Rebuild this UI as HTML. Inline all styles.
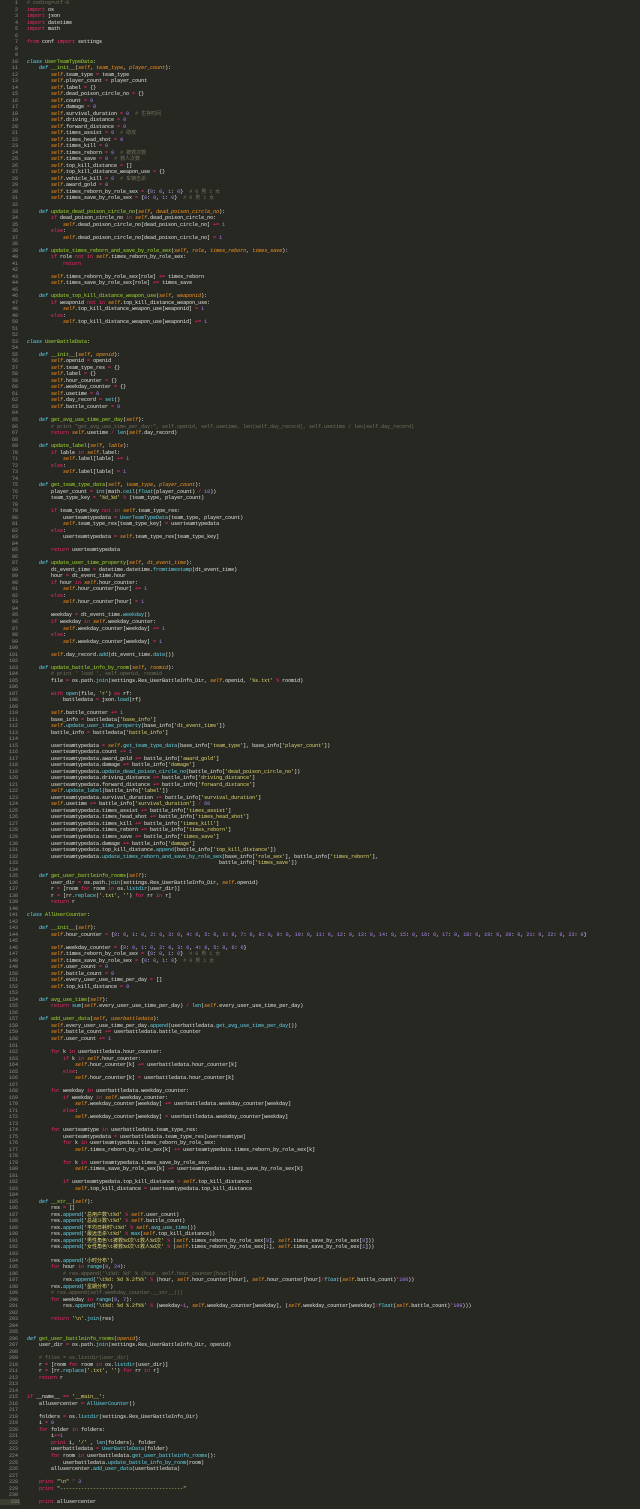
<!DOCTYPE html>
<html><head><meta charset="utf-8"><style>
html,body{margin:0;padding:0;background:#272822;width:640px;height:1509px;overflow:hidden}
#w{position:absolute;left:0;top:0;font-family:"Liberation Mono","Noto Sans CJK SC",monospace;font-size:5px;color:#e8e8e2}
.l{height:6.52px;line-height:6.52px;white-space:pre;position:relative}
.g{display:inline-block;width:18px;text-align:right;color:#8f908a;margin-right:9px}
.cur .g{background:#3e3d32;width:20px;margin-right:7px;padding-right:0}
.k{color:#f92672}.s{color:#fd971f;font-style:italic}.t{color:#e6db74}.n{color:#ae81ff}.f{color:#a6e22e}.c{color:#66d9ef;font-style:italic}.m{color:#75715e}.b{color:#66d9ef}.p{color:#fd971f;font-style:italic}
</style></head><body><div id="w">
<div class="l"><span class="g">1</span><span class="m"># coding=utf-8</span></div>
<div class="l"><span class="g">2</span><span class="k">import</span> os</div>
<div class="l"><span class="g">3</span><span class="k">import</span> json</div>
<div class="l"><span class="g">4</span><span class="k">import</span> datetime</div>
<div class="l"><span class="g">5</span><span class="k">import</span> math</div>
<div class="l"><span class="g">6</span></div>
<div class="l"><span class="g">7</span><span class="k">from</span> conf <span class="k">import</span> settings</div>
<div class="l"><span class="g">8</span></div>
<div class="l"><span class="g">9</span></div>
<div class="l"><span class="g">10</span><span class="c">class</span> <span class="f">UserTeamTypeData</span>:</div>
<div class="l"><span class="g">11</span>    <span class="c">def</span> <span class="f">__init__</span>(<span class="p">self</span>, <span class="p">team_type</span>, <span class="p">player_count</span>):</div>
<div class="l"><span class="g">12</span>        <span class="s">self</span>.team_type <span class="k">=</span> team_type</div>
<div class="l"><span class="g">13</span>        <span class="s">self</span>.player_count <span class="k">=</span> player_count</div>
<div class="l"><span class="g">14</span>        <span class="s">self</span>.label <span class="k">=</span> {}</div>
<div class="l"><span class="g">15</span>        <span class="s">self</span>.dead_poison_circle_no <span class="k">=</span> {}</div>
<div class="l"><span class="g">16</span>        <span class="s">self</span>.count <span class="k">=</span> <span class="n">0</span></div>
<div class="l"><span class="g">17</span>        <span class="s">self</span>.damage <span class="k">=</span> <span class="n">0</span></div>
<div class="l"><span class="g">18</span>        <span class="s">self</span>.survival_duration <span class="k">=</span> <span class="n">0</span>  <span class="m"># 生存时间</span></div>
<div class="l"><span class="g">19</span>        <span class="s">self</span>.driving_distance <span class="k">=</span> <span class="n">0</span></div>
<div class="l"><span class="g">20</span>        <span class="s">self</span>.forward_distance <span class="k">=</span> <span class="n">0</span></div>
<div class="l"><span class="g">21</span>        <span class="s">self</span>.times_assist <span class="k">=</span> <span class="n">0</span>  <span class="m"># 助攻</span></div>
<div class="l"><span class="g">22</span>        <span class="s">self</span>.times_head_shot <span class="k">=</span> <span class="n">0</span></div>
<div class="l"><span class="g">23</span>        <span class="s">self</span>.times_kill <span class="k">=</span> <span class="n">0</span></div>
<div class="l"><span class="g">24</span>        <span class="s">self</span>.times_reborn <span class="k">=</span> <span class="n">0</span>  <span class="m"># 被救次数</span></div>
<div class="l"><span class="g">25</span>        <span class="s">self</span>.times_save <span class="k">=</span> <span class="n">0</span>  <span class="m"># 救人次数</span></div>
<div class="l"><span class="g">26</span>        <span class="s">self</span>.top_kill_distance <span class="k">=</span> []</div>
<div class="l"><span class="g">27</span>        <span class="s">self</span>.top_kill_distance_weapon_use <span class="k">=</span> {}</div>
<div class="l"><span class="g">28</span>        <span class="s">self</span>.vehicle_kill <span class="k">=</span> <span class="n">0</span>  <span class="m"># 车辆击杀</span></div>
<div class="l"><span class="g">29</span>        <span class="s">self</span>.award_gold <span class="k">=</span> <span class="n">0</span></div>
<div class="l"><span class="g">30</span>        <span class="s">self</span>.times_reborn_by_role_sex <span class="k">=</span> {<span class="n">0</span>: <span class="n">0</span>, <span class="n">1</span>: <span class="n">0</span>}  <span class="m"># 0 男 1 女</span></div>
<div class="l"><span class="g">31</span>        <span class="s">self</span>.times_save_by_role_sex <span class="k">=</span> {<span class="n">0</span>: <span class="n">0</span>, <span class="n">1</span>: <span class="n">0</span>}  <span class="m"># 0 男 1 女</span></div>
<div class="l"><span class="g">32</span></div>
<div class="l"><span class="g">33</span>    <span class="c">def</span> <span class="f">update_dead_poison_circle_no</span>(<span class="p">self</span>, <span class="p">dead_poison_circle_no</span>):</div>
<div class="l"><span class="g">34</span>        <span class="k">if</span> dead_poison_circle_no <span class="k">in</span> <span class="s">self</span>.dead_poison_circle_no:</div>
<div class="l"><span class="g">35</span>            <span class="s">self</span>.dead_poison_circle_no[dead_poison_circle_no] <span class="k">+=</span> <span class="n">1</span></div>
<div class="l"><span class="g">36</span>        <span class="k">else</span>:</div>
<div class="l"><span class="g">37</span>            <span class="s">self</span>.dead_poison_circle_no[dead_poison_circle_no] <span class="k">=</span> <span class="n">1</span></div>
<div class="l"><span class="g">38</span></div>
<div class="l"><span class="g">39</span>    <span class="c">def</span> <span class="f">update_times_reborn_and_save_by_role_sex</span>(<span class="p">self</span>, <span class="p">role</span>, <span class="p">times_reborn</span>, <span class="p">times_save</span>):</div>
<div class="l"><span class="g">40</span>        <span class="k">if</span> role <span class="k">not in</span> <span class="s">self</span>.times_reborn_by_role_sex:</div>
<div class="l"><span class="g">41</span>            <span class="k">return</span></div>
<div class="l"><span class="g">42</span></div>
<div class="l"><span class="g">43</span>        <span class="s">self</span>.times_reborn_by_role_sex[role] <span class="k">+=</span> times_reborn</div>
<div class="l"><span class="g">44</span>        <span class="s">self</span>.times_save_by_role_sex[role] <span class="k">+=</span> times_save</div>
<div class="l"><span class="g">45</span></div>
<div class="l"><span class="g">46</span>    <span class="c">def</span> <span class="f">update_top_kill_distance_weapon_use</span>(<span class="p">self</span>, <span class="p">weaponid</span>):</div>
<div class="l"><span class="g">47</span>        <span class="k">if</span> weaponid <span class="k">not in</span> <span class="s">self</span>.top_kill_distance_weapon_use:</div>
<div class="l"><span class="g">48</span>            <span class="s">self</span>.top_kill_distance_weapon_use[weaponid] <span class="k">=</span> <span class="n">1</span></div>
<div class="l"><span class="g">49</span>        <span class="k">else</span>:</div>
<div class="l"><span class="g">50</span>            <span class="s">self</span>.top_kill_distance_weapon_use[weaponid] <span class="k">+=</span> <span class="n">1</span></div>
<div class="l"><span class="g">51</span></div>
<div class="l"><span class="g">52</span></div>
<div class="l"><span class="g">53</span><span class="c">class</span> <span class="f">UserBattleData</span>:</div>
<div class="l"><span class="g">54</span></div>
<div class="l"><span class="g">55</span>    <span class="c">def</span> <span class="f">__init__</span>(<span class="p">self</span>, <span class="p">openid</span>):</div>
<div class="l"><span class="g">56</span>        <span class="s">self</span>.openid <span class="k">=</span> openid</div>
<div class="l"><span class="g">57</span>        <span class="s">self</span>.team_type_res <span class="k">=</span> {}</div>
<div class="l"><span class="g">58</span>        <span class="s">self</span>.label <span class="k">=</span> {}</div>
<div class="l"><span class="g">59</span>        <span class="s">self</span>.hour_counter <span class="k">=</span> {}</div>
<div class="l"><span class="g">60</span>        <span class="s">self</span>.weekday_counter <span class="k">=</span> {}</div>
<div class="l"><span class="g">61</span>        <span class="s">self</span>.usetime <span class="k">=</span> <span class="n">0</span></div>
<div class="l"><span class="g">62</span>        <span class="s">self</span>.day_record <span class="k">=</span> <span class="b">set</span>()</div>
<div class="l"><span class="g">63</span>        <span class="s">self</span>.battle_counter <span class="k">=</span> <span class="n">0</span></div>
<div class="l"><span class="g">64</span></div>
<div class="l"><span class="g">65</span>    <span class="c">def</span> <span class="f">get_avg_use_time_per_day</span>(<span class="p">self</span>):</div>
<div class="l"><span class="g">66</span>        <span class="m"># print "get_avg_use_time_per_day:", self.openid, self.usetime, len(self.day_record), self.usetime / len(self.day_record)</span></div>
<div class="l"><span class="g">67</span>        <span class="k">return</span> <span class="s">self</span>.usetime <span class="k">/</span> <span class="b">len</span>(<span class="s">self</span>.day_record)</div>
<div class="l"><span class="g">68</span></div>
<div class="l"><span class="g">69</span>    <span class="c">def</span> <span class="f">update_label</span>(<span class="p">self</span>, <span class="p">lable</span>):</div>
<div class="l"><span class="g">70</span>        <span class="k">if</span> lable <span class="k">in</span> <span class="s">self</span>.label:</div>
<div class="l"><span class="g">71</span>            <span class="s">self</span>.label[lable] <span class="k">+=</span> <span class="n">1</span></div>
<div class="l"><span class="g">72</span>        <span class="k">else</span>:</div>
<div class="l"><span class="g">73</span>            <span class="s">self</span>.label[lable] <span class="k">=</span> <span class="n">1</span></div>
<div class="l"><span class="g">74</span></div>
<div class="l"><span class="g">75</span>    <span class="c">def</span> <span class="f">get_team_type_data</span>(<span class="p">self</span>, <span class="p">team_type</span>, <span class="p">player_count</span>):</div>
<div class="l"><span class="g">76</span>        player_count <span class="k">=</span> <span class="b">int</span>(math.<span class="b">ceil</span>(<span class="c">float</span>(player_count) <span class="k">/</span> <span class="n">10</span>))</div>
<div class="l"><span class="g">77</span>        team_type_key <span class="k">=</span> <span class="t">'%d_%d'</span> <span class="k">%</span> (team_type, player_count)</div>
<div class="l"><span class="g">78</span></div>
<div class="l"><span class="g">79</span>        <span class="k">if</span> team_type_key <span class="k">not in</span> <span class="s">self</span>.team_type_res:</div>
<div class="l"><span class="g">80</span>            userteamtypedata <span class="k">=</span> <span class="b">UserTeamTypeData</span>(team_type, player_count)</div>
<div class="l"><span class="g">81</span>            <span class="s">self</span>.team_type_res[team_type_key] <span class="k">=</span> userteamtypedata</div>
<div class="l"><span class="g">82</span>        <span class="k">else</span>:</div>
<div class="l"><span class="g">83</span>            userteamtypedata <span class="k">=</span> <span class="s">self</span>.team_type_res[team_type_key]</div>
<div class="l"><span class="g">84</span></div>
<div class="l"><span class="g">85</span>        <span class="k">return</span> userteamtypedata</div>
<div class="l"><span class="g">86</span></div>
<div class="l"><span class="g">87</span>    <span class="c">def</span> <span class="f">update_user_time_property</span>(<span class="p">self</span>, <span class="p">dt_event_time</span>):</div>
<div class="l"><span class="g">88</span>        dt_event_time <span class="k">=</span> datetime.datetime.<span class="b">fromtimestamp</span>(dt_event_time)</div>
<div class="l"><span class="g">89</span>        hour <span class="k">=</span> dt_event_time.hour</div>
<div class="l"><span class="g">90</span>        <span class="k">if</span> hour <span class="k">in</span> <span class="s">self</span>.hour_counter:</div>
<div class="l"><span class="g">91</span>            <span class="s">self</span>.hour_counter[hour] <span class="k">+=</span> <span class="n">1</span></div>
<div class="l"><span class="g">92</span>        <span class="k">else</span>:</div>
<div class="l"><span class="g">93</span>            <span class="s">self</span>.hour_counter[hour] <span class="k">=</span> <span class="n">1</span></div>
<div class="l"><span class="g">94</span></div>
<div class="l"><span class="g">95</span>        weekday <span class="k">=</span> dt_event_time.<span class="b">weekday</span>()</div>
<div class="l"><span class="g">96</span>        <span class="k">if</span> weekday <span class="k">in</span> <span class="s">self</span>.weekday_counter:</div>
<div class="l"><span class="g">97</span>            <span class="s">self</span>.weekday_counter[weekday] <span class="k">+=</span> <span class="n">1</span></div>
<div class="l"><span class="g">98</span>        <span class="k">else</span>:</div>
<div class="l"><span class="g">99</span>            <span class="s">self</span>.weekday_counter[weekday] <span class="k">=</span> <span class="n">1</span></div>
<div class="l"><span class="g">100</span></div>
<div class="l"><span class="g">101</span>        <span class="s">self</span>.day_record.<span class="b">add</span>(dt_event_time.<span class="b">date</span>())</div>
<div class="l"><span class="g">102</span></div>
<div class="l"><span class="g">103</span>    <span class="c">def</span> <span class="f">update_battle_info_by_room</span>(<span class="p">self</span>, <span class="p">roomid</span>):</div>
<div class="l"><span class="g">104</span>        <span class="m"># print ' load ', self.openid, roomid</span></div>
<div class="l"><span class="g">105</span>        file <span class="k">=</span> os.path.<span class="b">join</span>(settings.Res_UserBattleInfo_Dir, <span class="s">self</span>.openid, <span class="t">'%s.txt'</span> <span class="k">%</span> roomid)</div>
<div class="l"><span class="g">106</span></div>
<div class="l"><span class="g">107</span>        <span class="k">with</span> <span class="b">open</span>(file, <span class="t">'r'</span>) <span class="k">as</span> rf:</div>
<div class="l"><span class="g">108</span>            battledata <span class="k">=</span> json.<span class="b">load</span>(rf)</div>
<div class="l"><span class="g">109</span></div>
<div class="l"><span class="g">110</span>        <span class="s">self</span>.battle_counter <span class="k">+=</span> <span class="n">1</span></div>
<div class="l"><span class="g">111</span>        base_info <span class="k">=</span> battledata[<span class="t">'base_info'</span>]</div>
<div class="l"><span class="g">112</span>        <span class="s">self</span>.<span class="b">update_user_time_property</span>(base_info[<span class="t">'dt_event_time'</span>])</div>
<div class="l"><span class="g">113</span>        battle_info <span class="k">=</span> battledata[<span class="t">'battle_info'</span>]</div>
<div class="l"><span class="g">114</span></div>
<div class="l"><span class="g">115</span>        userteamtypedata <span class="k">=</span> <span class="s">self</span>.<span class="b">get_team_type_data</span>(base_info[<span class="t">'team_type'</span>], base_info[<span class="t">'player_count'</span>])</div>
<div class="l"><span class="g">116</span>        userteamtypedata.count <span class="k">+=</span> <span class="n">1</span></div>
<div class="l"><span class="g">117</span>        userteamtypedata.award_gold <span class="k">+=</span> battle_info[<span class="t">'award_gold'</span>]</div>
<div class="l"><span class="g">118</span>        userteamtypedata.damage <span class="k">+=</span> battle_info[<span class="t">'damage'</span>]</div>
<div class="l"><span class="g">119</span>        userteamtypedata.<span class="b">update_dead_poison_circle_no</span>(battle_info[<span class="t">'dead_poison_circle_no'</span>])</div>
<div class="l"><span class="g">120</span>        userteamtypedata.driving_distance <span class="k">+=</span> battle_info[<span class="t">'driving_distance'</span>]</div>
<div class="l"><span class="g">121</span>        userteamtypedata.forward_distance <span class="k">+=</span> battle_info[<span class="t">'forward_distance'</span>]</div>
<div class="l"><span class="g">122</span>        <span class="s">self</span>.<span class="b">update_label</span>(battle_info[<span class="t">'label'</span>])</div>
<div class="l"><span class="g">123</span>        userteamtypedata.survival_duration <span class="k">+=</span> battle_info[<span class="t">'survival_duration'</span>]</div>
<div class="l"><span class="g">124</span>        <span class="s">self</span>.usetime <span class="k">+=</span> battle_info[<span class="t">'survival_duration'</span>] <span class="k">/</span> <span class="n">60</span></div>
<div class="l"><span class="g">125</span>        userteamtypedata.times_assist <span class="k">+=</span> battle_info[<span class="t">'times_assist'</span>]</div>
<div class="l"><span class="g">126</span>        userteamtypedata.times_head_shot <span class="k">+=</span> battle_info[<span class="t">'times_head_shot'</span>]</div>
<div class="l"><span class="g">127</span>        userteamtypedata.times_kill <span class="k">+=</span> battle_info[<span class="t">'times_kill'</span>]</div>
<div class="l"><span class="g">128</span>        userteamtypedata.times_reborn <span class="k">+=</span> battle_info[<span class="t">'times_reborn'</span>]</div>
<div class="l"><span class="g">129</span>        userteamtypedata.times_save <span class="k">+=</span> battle_info[<span class="t">'times_save'</span>]</div>
<div class="l"><span class="g">130</span>        userteamtypedata.damage <span class="k">+=</span> battle_info[<span class="t">'damage'</span>]</div>
<div class="l"><span class="g">131</span>        userteamtypedata.top_kill_distance.<span class="b">append</span>(battle_info[<span class="t">'top_kill_distance'</span>])</div>
<div class="l"><span class="g">132</span>        userteamtypedata.<span class="b">update_times_reborn_and_save_by_role_sex</span>(base_info[<span class="t">'role_sex'</span>], battle_info[<span class="t">'times_reborn'</span>],</div>
<div class="l"><span class="g">133</span>                                                                battle_info[<span class="t">'times_save'</span>])</div>
<div class="l"><span class="g">134</span></div>
<div class="l"><span class="g">135</span>    <span class="c">def</span> <span class="f">get_user_battleinfo_rooms</span>(<span class="p">self</span>):</div>
<div class="l"><span class="g">136</span>        user_dir <span class="k">=</span> os.path.<span class="b">join</span>(settings.Res_UserBattleInfo_Dir, <span class="s">self</span>.openid)</div>
<div class="l"><span class="g">137</span>        r <span class="k">=</span> [room <span class="k">for</span> room <span class="k">in</span> os.<span class="b">listdir</span>(user_dir)]</div>
<div class="l"><span class="g">138</span>        r <span class="k">=</span> [rr.<span class="b">replace</span>(<span class="t">'.txt'</span>, <span class="t">''</span>) <span class="k">for</span> rr <span class="k">in</span> r]</div>
<div class="l"><span class="g">139</span>        <span class="k">return</span> r</div>
<div class="l"><span class="g">140</span></div>
<div class="l"><span class="g">141</span><span class="c">class</span> <span class="f">AllUserCounter</span>:</div>
<div class="l"><span class="g">142</span></div>
<div class="l"><span class="g">143</span>    <span class="c">def</span> <span class="f">__init__</span>(<span class="p">self</span>):</div>
<div class="l"><span class="g">144</span>        <span class="s">self</span>.hour_counter <span class="k">=</span> {<span class="n">0</span>: <span class="n">0</span>, <span class="n">1</span>: <span class="n">0</span>, <span class="n">2</span>: <span class="n">0</span>, <span class="n">3</span>: <span class="n">0</span>, <span class="n">4</span>: <span class="n">0</span>, <span class="n">5</span>: <span class="n">0</span>, <span class="n">6</span>: <span class="n">0</span>, <span class="n">7</span>: <span class="n">0</span>, <span class="n">8</span>: <span class="n">0</span>, <span class="n">9</span>: <span class="n">0</span>, <span class="n">10</span>: <span class="n">0</span>, <span class="n">11</span>: <span class="n">0</span>, <span class="n">12</span>: <span class="n">0</span>, <span class="n">13</span>: <span class="n">0</span>, <span class="n">14</span>: <span class="n">0</span>, <span class="n">15</span>: <span class="n">0</span>, <span class="n">16</span>: <span class="n">0</span>, <span class="n">17</span>: <span class="n">0</span>, <span class="n">18</span>: <span class="n">0</span>, <span class="n">19</span>: <span class="n">0</span>, <span class="n">20</span>: <span class="n">0</span>, <span class="n">21</span>: <span class="n">0</span>, <span class="n">22</span>: <span class="n">0</span>, <span class="n">23</span>: <span class="n">0</span>}</div>
<div class="l"><span class="g">145</span></div>
<div class="l"><span class="g">146</span>        <span class="s">self</span>.weekday_counter <span class="k">=</span> {<span class="n">0</span>: <span class="n">0</span>, <span class="n">1</span>: <span class="n">0</span>, <span class="n">2</span>: <span class="n">0</span>, <span class="n">3</span>: <span class="n">0</span>, <span class="n">4</span>: <span class="n">0</span>, <span class="n">5</span>: <span class="n">0</span>, <span class="n">6</span>: <span class="n">0</span>}</div>
<div class="l"><span class="g">147</span>        <span class="s">self</span>.times_reborn_by_role_sex <span class="k">=</span> {<span class="n">0</span>: <span class="n">0</span>, <span class="n">1</span>: <span class="n">0</span>}  <span class="m"># 0 男 1 女</span></div>
<div class="l"><span class="g">148</span>        <span class="s">self</span>.times_save_by_role_sex <span class="k">=</span> {<span class="n">0</span>: <span class="n">0</span>, <span class="n">1</span>: <span class="n">0</span>}  <span class="m"># 0 男 1 女</span></div>
<div class="l"><span class="g">149</span>        <span class="s">self</span>.user_count <span class="k">=</span> <span class="n">0</span></div>
<div class="l"><span class="g">150</span>        <span class="s">self</span>.battle_count <span class="k">=</span> <span class="n">0</span></div>
<div class="l"><span class="g">151</span>        <span class="s">self</span>.every_user_use_time_per_day <span class="k">=</span> []</div>
<div class="l"><span class="g">152</span>        <span class="s">self</span>.top_kill_distance <span class="k">=</span> <span class="n">0</span></div>
<div class="l"><span class="g">153</span></div>
<div class="l"><span class="g">154</span>    <span class="c">def</span> <span class="f">avg_use_time</span>(<span class="p">self</span>):</div>
<div class="l"><span class="g">155</span>        <span class="k">return</span> <span class="b">sum</span>(<span class="s">self</span>.every_user_use_time_per_day) <span class="k">/</span> <span class="b">len</span>(<span class="s">self</span>.every_user_use_time_per_day)</div>
<div class="l"><span class="g">156</span></div>
<div class="l"><span class="g">157</span>    <span class="c">def</span> <span class="f">add_user_data</span>(<span class="p">self</span>, <span class="p">userbattledata</span>):</div>
<div class="l"><span class="g">158</span>        <span class="s">self</span>.every_user_use_time_per_day.<span class="b">append</span>(userbattledata.<span class="b">get_avg_use_time_per_day</span>())</div>
<div class="l"><span class="g">159</span>        <span class="s">self</span>.battle_count <span class="k">+=</span> userbattledata.battle_counter</div>
<div class="l"><span class="g">160</span>        <span class="s">self</span>.user_count <span class="k">+=</span> <span class="n">1</span></div>
<div class="l"><span class="g">161</span></div>
<div class="l"><span class="g">162</span>        <span class="k">for</span> k <span class="k">in</span> userbattledata.hour_counter:</div>
<div class="l"><span class="g">163</span>            <span class="k">if</span> k <span class="k">in</span> <span class="s">self</span>.hour_counter:</div>
<div class="l"><span class="g">164</span>                <span class="s">self</span>.hour_counter[k] <span class="k">+=</span> userbattledata.hour_counter[k]</div>
<div class="l"><span class="g">165</span>            <span class="k">else</span>:</div>
<div class="l"><span class="g">166</span>                <span class="s">self</span>.hour_counter[k] <span class="k">=</span> userbattledata.hour_counter[k]</div>
<div class="l"><span class="g">167</span></div>
<div class="l"><span class="g">168</span>        <span class="k">for</span> weekday <span class="k">in</span> userbattledata.weekday_counter:</div>
<div class="l"><span class="g">169</span>            <span class="k">if</span> weekday <span class="k">in</span> <span class="s">self</span>.weekday_counter:</div>
<div class="l"><span class="g">170</span>                <span class="s">self</span>.weekday_counter[weekday] <span class="k">+=</span> userbattledata.weekday_counter[weekday]</div>
<div class="l"><span class="g">171</span>            <span class="k">else</span>:</div>
<div class="l"><span class="g">172</span>                <span class="s">self</span>.weekday_counter[weekday] <span class="k">=</span> userbattledata.weekday_counter[weekday]</div>
<div class="l"><span class="g">173</span></div>
<div class="l"><span class="g">174</span>        <span class="k">for</span> userteamtype <span class="k">in</span> userbattledata.team_type_res:</div>
<div class="l"><span class="g">175</span>            userteamtypedata <span class="k">=</span> userbattledata.team_type_res[userteamtype]</div>
<div class="l"><span class="g">176</span>            <span class="k">for</span> k <span class="k">in</span> userteamtypedata.times_reborn_by_role_sex:</div>
<div class="l"><span class="g">177</span>                <span class="s">self</span>.times_reborn_by_role_sex[k] <span class="k">+=</span> userteamtypedata.times_reborn_by_role_sex[k]</div>
<div class="l"><span class="g">178</span></div>
<div class="l"><span class="g">179</span>            <span class="k">for</span> k <span class="k">in</span> userteamtypedata.times_save_by_role_sex:</div>
<div class="l"><span class="g">180</span>                <span class="s">self</span>.times_save_by_role_sex[k] <span class="k">+=</span> userteamtypedata.times_save_by_role_sex[k]</div>
<div class="l"><span class="g">181</span></div>
<div class="l"><span class="g">182</span>            <span class="k">if</span> userteamtypedata.top_kill_distance <span class="k">&gt;</span> <span class="s">self</span>.top_kill_distance:</div>
<div class="l"><span class="g">183</span>                <span class="s">self</span>.top_kill_distance <span class="k">=</span> userteamtypedata.top_kill_distance</div>
<div class="l"><span class="g">184</span></div>
<div class="l"><span class="g">185</span>    <span class="c">def</span> <span class="f">__str__</span>(<span class="p">self</span>):</div>
<div class="l"><span class="g">186</span>        res <span class="k">=</span> []</div>
<div class="l"><span class="g">187</span>        res.<span class="b">append</span>(<span class="t">'总用户数\t%d'</span> <span class="k">%</span> <span class="s">self</span>.user_count)</div>
<div class="l"><span class="g">188</span>        res.<span class="b">append</span>(<span class="t">'总战斗数\t%d'</span> <span class="k">%</span> <span class="s">self</span>.battle_count)</div>
<div class="l"><span class="g">189</span>        res.<span class="b">append</span>(<span class="t">'平均日耗时\t%d'</span> <span class="k">%</span> <span class="s">self</span>.<span class="b">avg_use_time</span>())</div>
<div class="l"><span class="g">190</span>        res.<span class="b">append</span>(<span class="t">'最远击杀\t%d'</span> <span class="k">%</span> <span class="b">max</span>(<span class="s">self</span>.top_kill_distance))</div>
<div class="l"><span class="g">191</span>        res.<span class="b">append</span>(<span class="t">'男性角色\t被救%d次\t救人%d次'</span> <span class="k">%</span> (<span class="s">self</span>.times_reborn_by_role_sex[<span class="n">0</span>], <span class="s">self</span>.times_save_by_role_sex[<span class="n">0</span>]))</div>
<div class="l"><span class="g">192</span>        res.<span class="b">append</span>(<span class="t">'女性角色\t被救%d次\t救人%d次'</span> <span class="k">%</span> (<span class="s">self</span>.times_reborn_by_role_sex[<span class="n">1</span>], <span class="s">self</span>.times_save_by_role_sex[<span class="n">1</span>]))</div>
<div class="l"><span class="g">193</span></div>
<div class="l"><span class="g">194</span>        res.<span class="b">append</span>(<span class="t">'小时分布'</span>)</div>
<div class="l"><span class="g">195</span>        <span class="k">for</span> hour <span class="k">in</span> <span class="b">range</span>(<span class="n">0</span>, <span class="n">24</span>):</div>
<div class="l"><span class="g">196</span>            <span class="m"># res.append('\t%d: %d' % (hour, self.hour_counter[hour]))</span></div>
<div class="l"><span class="g">197</span>            res.<span class="b">append</span>(<span class="t">'\t%d: %d %.2f%%'</span> <span class="k">%</span> (hour, <span class="s">self</span>.hour_counter[hour], <span class="s">self</span>.hour_counter[hour]<span class="k">/</span><span class="c">float</span>(<span class="s">self</span>.battle_count)<span class="k">*</span><span class="n">100</span>))</div>
<div class="l"><span class="g">198</span>        res.<span class="b">append</span>(<span class="t">'星期分布'</span>)</div>
<div class="l"><span class="g">199</span>        <span class="m"># res.append(self.weekday_counter.__str__())</span></div>
<div class="l"><span class="g">200</span>        <span class="k">for</span> weekday <span class="k">in</span> <span class="b">range</span>(<span class="n">0</span>, <span class="n">7</span>):</div>
<div class="l"><span class="g">201</span>            res.<span class="b">append</span>(<span class="t">'\t%d: %d %.2f%%'</span> <span class="k">%</span> (weekday<span class="k">+</span><span class="n">1</span>, <span class="s">self</span>.weekday_counter[weekday], (<span class="s">self</span>.weekday_counter[weekday]<span class="k">/</span><span class="c">float</span>(<span class="s">self</span>.battle_count)<span class="k">*</span><span class="n">100</span>)))</div>
<div class="l"><span class="g">202</span></div>
<div class="l"><span class="g">203</span>        <span class="k">return</span> <span class="t">'\n'</span>.<span class="b">join</span>(res)</div>
<div class="l"><span class="g">204</span></div>
<div class="l"><span class="g">205</span></div>
<div class="l"><span class="g">206</span><span class="c">def</span> <span class="f">get_user_battleinfo_rooms</span>(<span class="p">openid</span>):</div>
<div class="l"><span class="g">207</span>    user_dir <span class="k">=</span> os.path.<span class="b">join</span>(settings.Res_UserBattleInfo_Dir, openid)</div>
<div class="l"><span class="g">208</span></div>
<div class="l"><span class="g">209</span>    <span class="m"># files = os.listdir(user_dir)</span></div>
<div class="l"><span class="g">210</span>    r <span class="k">=</span> [room <span class="k">for</span> room <span class="k">in</span> os.<span class="b">listdir</span>(user_dir)]</div>
<div class="l"><span class="g">211</span>    r <span class="k">=</span> [rr.<span class="b">replace</span>(<span class="t">'.txt'</span>, <span class="t">''</span>) <span class="k">for</span> rr <span class="k">in</span> r]</div>
<div class="l"><span class="g">212</span>    <span class="k">return</span> r</div>
<div class="l"><span class="g">213</span></div>
<div class="l"><span class="g">214</span></div>
<div class="l"><span class="g">215</span><span class="k">if</span> __name__ <span class="k">==</span> <span class="t">'__main__'</span>:</div>
<div class="l"><span class="g">216</span>    allusercenter <span class="k">=</span> <span class="b">AllUserCounter</span>()</div>
<div class="l"><span class="g">217</span></div>
<div class="l"><span class="g">218</span>    folders <span class="k">=</span> os.<span class="b">listdir</span>(settings.Res_UserBattleInfo_Dir)</div>
<div class="l"><span class="g">219</span>    i <span class="k">=</span> <span class="n">0</span></div>
<div class="l"><span class="g">220</span>    <span class="k">for</span> folder <span class="k">in</span> folders:</div>
<div class="l"><span class="g">221</span>        i<span class="k">+=</span><span class="n">1</span></div>
<div class="l"><span class="g">222</span>        <span class="k">print</span> i, <span class="t">'/'</span> , <span class="b">len</span>(folders), folder</div>
<div class="l"><span class="g">223</span>        userbattledata <span class="k">=</span> <span class="b">UserBattleData</span>(folder)</div>
<div class="l"><span class="g">224</span>        <span class="k">for</span> room <span class="k">in</span> userbattledata.<span class="b">get_user_battleinfo_rooms</span>():</div>
<div class="l"><span class="g">225</span>            userbattledata.<span class="b">update_battle_info_by_room</span>(room)</div>
<div class="l"><span class="g">226</span>        allusercenter.<span class="b">add_user_data</span>(userbattledata)</div>
<div class="l"><span class="g">227</span></div>
<div class="l"><span class="g">228</span>    <span class="k">print</span> <span class="t">"\n"</span> <span class="k">*</span> <span class="n">3</span></div>
<div class="l"><span class="g">229</span>    <span class="k">print</span> <span class="t">"-----------------------------------------"</span></div>
<div class="l"><span class="g">230</span></div>
<div class="l cur"><span class="g">231</span>    <span class="k">print</span> allusercenter</div>
</div></body></html>
